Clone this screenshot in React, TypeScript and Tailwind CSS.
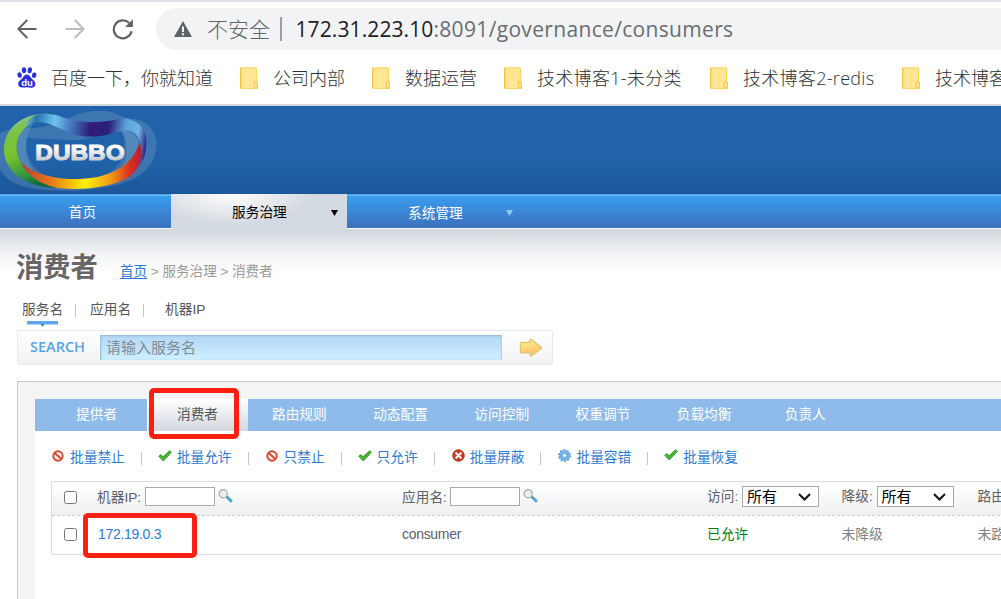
import React from "react";
import { clsx } from "clsx";

const UI_FONT = "font-['Open_Sans','Noto_Sans_CJK_SC',sans-serif]";
const BODY_FONT = "font-['Liberation_Sans','Noto_Sans_CJK_SC',sans-serif]";

function BackArrow({ className }: { className?: string }) {
  return (
    <svg width="20" height="20" viewBox="0 0 20 20" className={className} fill="none" stroke="currentColor" strokeWidth="2">
      <path d="M19.5 10H2M10.3 1L1.3 10l9 9" />
    </svg>
  );
}

function Reload() {
  return (
    <svg width="22" height="22" viewBox="0 0 22 22">
      <path d="M19.6 13.2A9 9 0 1 1 17.2 5" fill="none" stroke="#5f6368" strokeWidth="2.2" />
      <path d="M20.9 1.3v7.8h-7.8z" fill="#5f6368" />
    </svg>
  );
}

function Warning() {
  return (
    <svg width="18" height="16" viewBox="0 0 18 16">
      <path d="M9 0l9 16H0z" fill="#5f6368" />
      <path d="M8 5.5h2V11H8zM8 12.2h2v2H8z" fill="#f1f3f4" />
    </svg>
  );
}

function Paw() {
  return (
    <svg width="20" height="21" viewBox="0 0 20 21" fill="#2a2fdc">
      <ellipse cx="2.6" cy="8" rx="2.1" ry="2.8" transform="rotate(-12 2.6 8)" />
      <ellipse cx="7" cy="3.3" rx="2.2" ry="3" />
      <ellipse cx="12.8" cy="3.3" rx="2.2" ry="3" transform="rotate(8 12.8 3.3)" />
      <ellipse cx="17.2" cy="8.2" rx="2.2" ry="2.8" transform="rotate(10 17.2 8.2)" />
      <path d="M9.8 7.600c2 0 3 1.600 4.200 3.200 1.600 2 4.400 3.200 4.400 6.200 0 2.500-1.800 3.800-4.200 3.700-1.600 0-2.800-.5-4.400-.5s-2.800.5-4.400.4C3 20.600 1.200 19.300 1.200 17c0-3 2.900-4.200 4.500-6.200C6.900 9.200 7.900 7.600 9.800 7.600z" />
      <text x="4.200" y="18.600" fontSize="9.500" fontWeight="bold" fill="#fff" fontFamily="Liberation Sans">du</text>
    </svg>
  );
}

function Folder() {
  return (
    <svg width="18" height="22" viewBox="0 0 18 22" className="flex-none">
      <path d="M1 .8h15.500v13.800l1 .6v6.300H1z" fill="#ffe694" stroke="#fbd85e" strokeWidth="1" />
      <path d="M.6.8v20.500" stroke="#ecc547" strokeWidth="1.200" />
      <path d="M14.200 21v-5.200q0-1.300 1.600-1.300t1.600 1.300V21z" fill="#ffe694" stroke="#efc94b" strokeWidth="1.100" />
    </svg>
  );
}

function Logo() {
  return (
    <svg width="160" height="88" viewBox="0 18 480 264" className="block">
      <defs>
        <linearGradient id="green" x1="0" y1="0" x2="0.35" y2="1">
          <stop offset="0" stopColor="#8fcfd0" />
          <stop offset="0.25" stopColor="#7cc348" />
          <stop offset="0.55" stopColor="#79c22c" />
          <stop offset="0.85" stopColor="#2c9640" />
          <stop offset="1" stopColor="#0a6c3c" />
        </linearGradient>
        <linearGradient id="blue" gradientUnits="userSpaceOnUse" x1="80" y1="60" x2="440" y2="110">
          <stop offset="0" stopColor="#6db4c0" />
          <stop offset="0.08" stopColor="#2674b0" />
          <stop offset="0.23" stopColor="#6fc3ee" />
          <stop offset="0.38" stopColor="#4272b9" />
          <stop offset="0.53" stopColor="#2e1c78" />
          <stop offset="0.68" stopColor="#2b2079" />
          <stop offset="0.82" stopColor="#5ba5da" />
          <stop offset="0.93" stopColor="#6fb3e4" />
          <stop offset="1" stopColor="#2c2c8c" />
        </linearGradient>
        <linearGradient id="warm" gradientUnits="userSpaceOnUse" x1="62" y1="0" x2="426" y2="0">
          <stop offset="0" stopColor="#b53c30" />
          <stop offset="0.25" stopColor="#e8781c" />
          <stop offset="0.53" stopColor="#fff200" />
          <stop offset="0.74" stopColor="#f29a18" />
          <stop offset="0.9" stopColor="#d8301f" />
          <stop offset="1" stopColor="#b02036" />
        </linearGradient>
        <linearGradient id="metal" x1="0" y1="0" x2="0" y2="1">
          <stop offset="0.3" stopColor="#ffffff" />
          <stop offset="1" stopColor="#b4b8be" />
        </linearGradient>
      </defs>
      <path
        fillRule="evenodd"
        fill="#8fa9c9"
        fillOpacity="0.27"
        d="M-6 102C30 82 60 84 100 84C180 78 220 32 300 32C350 32 365 56 400 56C450 62 476 105 468 150C460 200 420 238 350 255C270 275 150 278 80 262C30 250 -6 220 -6 180ZM80 112C70 180 110 236 200 246C300 250 362 215 372 150C376 122 372 100 362 84C320 76 290 124 210 120C150 118 130 120 80 112Z"
      />
      <path
        fill="#78b0cf"
        fillOpacity="0.3"
        d="M84 66C40 100 38 190 96 226L130 240C70 200 64 120 100 72Z"
      />
      <path
        fill="#78b0cf"
        fillOpacity="0.35"
        d="M362 92C400 90 420 110 418 150C410 190 380 210 352 220C392 180 384 120 362 92Z"
      />
      <path
        fill="url(#green)"
        d="M150 42C70 36 12 84 12 148C12 212 70 258 160 263L215 262C130 246 56 218 50 148C47 112 68 78 112 60L160 52Z"
      />
      <path
        fill="url(#blue)"
        d="M84 62C106 36 150 38 178 48C230 70 290 70 342 60C388 44 432 70 438 112C442 150 434 182 414 204L422 136C418 104 398 88 372 92C336 98 300 116 240 107C196 98 168 76 136 69C116 65 100 66 76 78Z"
      />
      <path
        fill="url(#warm)"
        d="M60 183C82 212 150 240 240 237C330 234 402 196 419 124C430 168 424 204 386 232C336 262 250 272 180 265C120 256 76 222 60 183Z"
      />
      <text
        x="106"
        y="180"
        textLength="268"
        lengthAdjust="spacingAndGlyphs"
        fontSize="66"
        fontWeight="bold"
        fontFamily="Liberation Sans, sans-serif"
        fill="url(#metal)"
        stroke="url(#metal)"
        strokeWidth="3"
      >
        DUBBO
      </text>
    </svg>
  );
}

function Forbid() {
  return (
    <svg width="12" height="12" viewBox="0 0 12 12" fill="none" stroke="#d4492f">
      <circle cx="6" cy="6" r="4.700" fill="#fbeeea" strokeWidth="1.900" />
      <path d="M2.800 3.200l6.400 5.600" strokeWidth="1.900" />
    </svg>
  );
}

function Check() {
  return (
    <svg width="14" height="12" viewBox="0 0 14 12" className="-ml-px">
      <path d="M.8 6.300l2-1.700 2.400 2.200L11.600.8l1.700 1.500-8 8.700z" fill="#4db535" stroke="#379a25" strokeWidth="1" strokeLinejoin="round" />
    </svg>
  );
}

function Cross() {
  return (
    <svg width="13" height="13" viewBox="0 0 13 13">
      <circle cx="6.500" cy="6.500" r="5.700" fill="#cf3a20" stroke="#a82a18" strokeWidth="1" />
      <path d="M4.200 4.200l4.600 4.600M8.800 4.200L4.200 8.800" stroke="#fff" strokeWidth="2.100" strokeLinecap="round" />
    </svg>
  );
}

function Gear() {
  return (
    <svg width="13" height="13" viewBox="0 0 13 13" fill="none">
      <circle cx="6.500" cy="6.500" r="5.600" stroke="#4d94d6" strokeWidth="1.500" strokeDasharray="2.200 1.300" />
      <circle cx="6.500" cy="6.500" r="3.800" stroke="#70b3ea" strokeWidth="3" />
      <circle cx="6.500" cy="6.500" r="2" fill="#fff" stroke="#4d94d6" strokeWidth=".8" />
    </svg>
  );
}

function Magnifier() {
  return (
    <svg width="15" height="14" viewBox="0 0 15 14">
      <path d="M9.500 8.500l3.500 3.300" stroke="#4fa6dc" strokeWidth="3" strokeLinecap="round" />
      <path d="M8.200 7.400l1.800 1.600" stroke="#777" strokeWidth="1.300" />
      <circle cx="5.200" cy="4.800" r="4.100" fill="#e9f1ef" stroke="#a3aaaa" strokeWidth="1.200" />
    </svg>
  );
}

function SearchArrow() {
  return (
    <svg width="24" height="20" viewBox="0 0 24 20">
      <defs>
        <linearGradient id="gold" x1="0" y1="0" x2="0.3" y2="1">
          <stop offset="0.2" stopColor="#fdf08e" />
          <stop offset="0.8" stopColor="#fdc670" />
        </linearGradient>
      </defs>
      <path d="M1.500 5.500q0-1 1-1H11V2.200q.2-1.200 1.400-.6l9.800 7.600q.6.700 0 1.300l-9.600 7.300q-1.300.4-1.600-.8V14.800H2.500q-1 0-1-1z" fill="url(#gold)" stroke="#e3c578" strokeWidth="1.500" />
    </svg>
  );
}

const bookmarks = [
  { label: "公司内部", width: "w-[132px]" },
  { label: "数据运营", width: "w-[132px]" },
  { label: "技术博客1-未分类", width: "w-[206px] tracking-[0.3px]" },
  { label: "技术博客2-redis", width: "w-[192px] tracking-[0.3px]" },
  { label: "技术博客", width: "w-[160px]" },
];

function Browser() {
  return (
    <header className={clsx("flex h-[106px] flex-none flex-col border-t-2 border-b-2 border-t-[#dee1e6] border-b-[#d5d8db] bg-white", UI_FONT)}>
      <div className="mt-1.5 flex h-[42px] flex-none items-center">
        <BackArrow className="ml-[17px] text-[#5f6368]" />
        <BackArrow className="ml-7 rotate-180 text-[#babcbe]" />
        <span className="ml-[27px] w-[44px]"><Reload /></span>
        <div className="flex h-full flex-1 items-center rounded-l-full bg-[#f1f3f4] pl-[18px] text-[21px] whitespace-nowrap text-[#5f6368]">
          <Warning />
          <span className="ml-[15px] w-[73px] pt-0.5 font-light">不安全</span>
          <span className="h-6 w-[1.5px] bg-[#9aa0a6]" />
          <span className="ml-[14px] pt-0.5 tracking-[0.1px] text-[#202124]">172.31.223.10</span>
          <span className="pt-0.5 tracking-[0.33px] text-[#6a6d71]">:8091/governance/consumers</span>
        </div>
      </div>
      <nav className="mt-[1px] flex flex-1 items-center text-[18px] leading-none whitespace-nowrap text-[#2c3033]">
        <div className="flex w-[240px] flex-none items-center pl-[17px]">
          <Paw />
          <span className="ml-[14px] pt-px font-light">百度一下，你就知道</span>
        </div>
        {bookmarks.map((b) => (
          <div key={b.label} className={clsx("flex flex-none items-center font-light", b.width)}>
            <Folder />
            <span className="ml-[15px] pt-px">{b.label}</span>
          </div>
        ))}
      </nav>
    </header>
  );
}

function MainNav() {
  return (
    <nav className="flex h-[35px] flex-none bg-[#d3d9e0] text-[13.7px] leading-none text-white">
      <div className="flex h-[35px] w-[171px] items-center justify-center border-b border-white bg-linear-to-b from-[#38a0f3] to-[#3b70bd] pt-[3px] pr-[6px] shadow-[inset_0_1px_#4c9eea,inset_0_2px_#6bbcff]">首页</div>
      <div className="flex h-[35px] w-[176px] items-center bg-[radial-gradient(ellipse_80px_30px_at_60px_0,#fdfdfd,#dde1e6_80%,#d4dae1)] pt-[2px] pl-[61px] text-black">
        <span className="w-[99px]">服务治理</span>
        <svg width="7" height="6" viewBox="0 0 7 6"><path d="M0 0h7L3.500 6z" /></svg>
      </div>
      <div className="flex h-[35px] flex-1 items-center border-b border-white bg-linear-to-b from-[#38a0f3] to-[#3b70bd] pt-[3px] pl-[61px] shadow-[inset_0_1px_#4c9eea,inset_0_2px_#6bbcff]">
        <span className="w-[98px] pt-[2px]">系统管理</span>
        <svg width="7" height="6" viewBox="0 0 7 6"><path d="M0 0h7L3.500 6z" fill="#93c9f7" /></svg>
      </div>
    </nav>
  );
}

function Heading() {
  return (
    <section className="flex h-[152px] flex-none flex-col bg-[linear-gradient(#d2d7dd,#e6e9ec_15px,#f4f5f7_27px,#fff_46px)] pl-[17px]">
      <div className="flex h-[64px] flex-none items-end leading-none">
        <h1 className="-ml-px w-[104px] pb-[12px] text-[27.3px] font-bold text-[#666]">消费者</h1>
        <div className="pb-[14px] text-[13.600px] tracking-[-0.040px] text-[#999]">
          <a className="text-[#2a7bd5] underline underline-offset-2">首页</a> &gt; 服务治理 &gt; 消费者
        </div>
      </div>
      <div className="flex h-[37px] flex-none pl-[5px] text-[13.7px] leading-[34px] text-[#555]">
        <div className="flex w-[53px] flex-col">
          <span className="h-[28px]">服务名</span>
          <svg width="31" height="6" viewBox="0 0 31 6" className="ml-[5px]">
            <path d="M0 0h31v3.500H0z" fill="#5ca8ea" />
            <path d="M13.500 3h4l-2 2.800z" fill="#2f74b5" />
          </svg>
        </div>
        <span className="mt-[11px] h-[13px] w-px bg-[#c4c4c4]" />
        <span className="ml-[14px] w-[53px]">应用名</span>
        <span className="mt-[11px] h-[13px] w-px bg-[#c4c4c4]" />
        <span className="ml-[21px]">机器IP</span>
      </div>
      <form className="flex h-[35px] w-[536px] flex-none items-center rounded-[2px] border border-[#e7eaef] bg-linear-to-b from-white to-[#f2f2f2]">
        <span className="w-[82px] pl-3 font-['Open_Sans',sans-serif] text-[14.5px] leading-none font-semibold text-[#57a3ea]">SEARCH</span>
        <input
          className="h-[25px] w-[402px] bg-linear-to-b from-[#b4d7f5] to-[#ccefff] pl-[6px] text-[15px] shadow-[inset_1px_1px_2px_#8fb9d8,inset_-1px_0_1px_#a8cde6] outline-none placeholder:text-[#7f8b95]"
          placeholder="请输入服务名"
        />
        <span className="ml-[17px]"><SearchArrow /></span>
      </form>
    </section>
  );
}

const tabs = ["路由规则", "动态配置", "访问控制", "权重调节", "负载均衡", "负责人"];

function Tabs() {
  return (
    <div className="flex h-8 flex-none bg-[#8fbbeb] text-[13.7px] leading-[31px] text-white">
      <div className="w-[112px] pl-[41px]">提供者</div>
      <div className="relative w-[101px] border-l border-white bg-linear-to-b from-white to-[#d3d8df] text-center text-[#555]">
        <span className="pr-[1px]">消费者</span>
        <span className="absolute top-[-11px] left-[1px] h-[51px] w-[90px] rounded-[5px] border-[5px] border-[#ff1e0f]" />
      </div>
      {tabs.map((t) => (
        <div key={t} className="w-[101.2px] pl-[1.5px] text-center">{t}</div>
      ))}
    </div>
  );
}

const actions = [
  { label: "批量禁止", icon: <Forbid /> },
  { label: "批量允许", icon: <Check /> },
  { label: "只禁止", icon: <Forbid /> },
  { label: "只允许", icon: <Check /> },
  { label: "批量屏蔽", icon: <Cross /> },
  { label: "批量容错", icon: <Gear /> },
  { label: "批量恢复", icon: <Check /> },
];

function Actions() {
  return (
    <div className="flex h-[50px] flex-none items-center pt-px pl-[17px] text-[13.7px] leading-none text-[#2b7bd4]">
      {actions.map((a, i) => (
        <div key={a.label} className="flex items-center">
          <span className="flex w-[18px] justify-start pb-[2px]">{a.icon}</span>
          <span className="mt-[2px]">{a.label}</span>
          {i < actions.length - 1 && <span className="mt-[3px] mr-[17px] ml-[16px] h-[13px] w-px bg-[#c9c5c5]" />}
        </div>
      ))}
    </div>
  );
}

function Filter({ label, offset }: { label: string; offset: string }) {
  return (
    <div className="flex items-center">
      <span className={clsx("pt-0.5", offset)}>{label}</span>
      <input className="h-[19px] w-[70px] border border-[#a9a9a9] bg-white" />
      <span className="ml-[3px] pb-[1px]"><Magnifier /></span>
    </div>
  );
}

function Choice({ label }: { label: string }) {
  return (
    <div className="flex items-center">
      <span className="-ml-px w-[35px] pt-px">{label}</span>
      <div className="flex h-[21px] w-[77px] items-center justify-between border border-[#a9a9a9] bg-white pr-[7px] pl-1 text-[15px] text-black">
        所有
        <svg width="13" height="8" viewBox="0 0 13 8" fill="none" stroke="#111" strokeWidth="2"><path d="M1 1l5.500 5.500L12 1" /></svg>
      </div>
    </div>
  );
}

const columns = "grid grid-cols-[46px_304px_306px_134.500px_135px_200px] items-center";

function ConsumerTable() {
  return (
    <div className="ml-4 h-[74px] w-[1000px] flex-none border border-[#dcdcdc] bg-white text-[13.7px] leading-none whitespace-nowrap text-[#5d6066]">
      <div className={clsx(columns, "h-[34px] border-b border-dashed border-[#ccc] bg-linear-to-b from-white to-[#eef0f2] pb-[4px]")}>
        <input type="checkbox" className="mt-[2px] ml-3 h-[13px] w-[13px]" />
        <Filter label="机器IP:" offset="-ml-px w-[48px]" />
        <Filter label="应用名:" offset="w-[48px]" />
        <Choice label="访问:" />
        <Choice label="降级:" />
        <span>路由:</span>
      </div>
      <div className={clsx(columns, "h-[38px] pb-px")}>
        <input type="checkbox" className="ml-3 h-[13px] w-[13px]" />
        <div className="relative -mt-px text-[14px] tracking-[-0.3px] text-[#2b7bd4]">
          172.19.0.3
          <span className="absolute top-[-14px] left-[-15px] h-[45px] w-[114px] rounded-[5px] border-[5px] border-[#ff1e0f]" />
        </div>
        <span className="-mt-px text-[14px] tracking-[-0.3px]">consumer</span>
        <span className="-ml-px text-[#008000]">已允许</span>
        <span className="-ml-px text-[#808080]">未降级</span>
        <span className="text-[#808080]">未路由</span>
      </div>
    </div>
  );
}

export default function App() {
  return (
    <div className={clsx("flex h-[599px] w-[1001px] flex-col overflow-hidden bg-white", BODY_FONT)}>
      <Browser />
      <div className="h-[88px] flex-none bg-linear-to-b from-[#2063ab] from-60% to-[#1c5799]">
        <Logo />
      </div>
      <MainNav />
      <Heading />
      <main className="ml-[17px] flex flex-1 flex-col border-t border-l border-[#c8ccca] bg-[#f3f5f4] pt-[17px] pl-[17px]">
        <div className="flex flex-1 flex-col bg-white">
          <Tabs />
          <Actions />
          <ConsumerTable />
        </div>
      </main>
    </div>
  );
}
